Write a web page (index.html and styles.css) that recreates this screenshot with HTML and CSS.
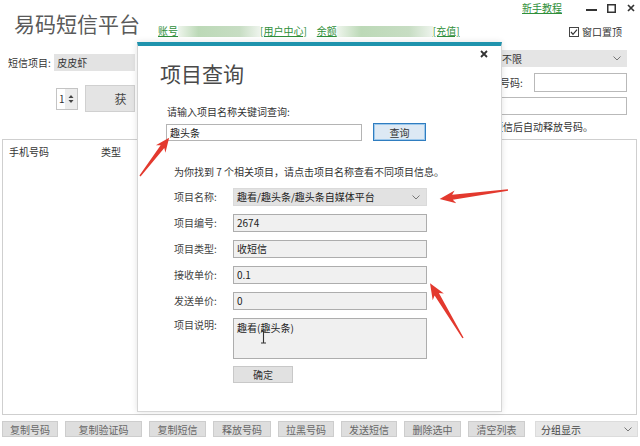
FILE: index.html
```html
<!DOCTYPE html>
<html lang="zh-CN">

<head>
    <meta charset="UTF-8" />
    <meta name="viewport" content="width=device-width,initial-scale=1.0" />
    <title>易码短信平台</title>
    <link rel="stylesheet" href="styles.css">
</head>

<body>
    <div class="app">
        <div class="topbar">
            <h1 class="brand">易码短信平台</h1>
            <div class="account">
                <a href="#">账号</a><span class="mask mask-user"></span><a href="#">[用户中心]</a>
                <a href="#" class="balance">余额</a><span class="mask mask-money"></span><a href="#">[充值]</a>
            </div>
            <div class="corner">
                <div class="wintools">
                    <a href="#">新手教程</a>
                    <svg class="wbtn-min" width="11" height="9" viewBox="0 0 11 9"><rect x="0" y="5" width="11" height="2" fill="#333"/></svg>
                    <svg class="wbtn-max" width="9" height="9" viewBox="0 0 9 9"><rect x="0.75" y="0.75" width="7.5" height="7.5" fill="none" stroke="#333" stroke-width="1.5"/></svg>
                    <svg class="wbtn-close" width="8" height="8" viewBox="0 0 8 8"><path d="M1 1L7 7M7 1L1 7" stroke="#333" stroke-width="1.7"/></svg>
                </div>
                <div class="pin">
                    <svg width="10" height="10" viewBox="0 0 10 10"><rect x="0.5" y="0.5" width="9" height="9" fill="#fff" stroke="#444"/><path d="M2 5L4 7.3L8 2.6" fill="none" stroke="#333" stroke-width="1.2"/></svg>
                    窗口置顶
                </div>
            </div>
        </div>

        <div class="panel">
            <div class="panel-left">
                <div class="row-project">
                    <span class="row-label">短信项目:</span>
                    <div class="combo-input">皮皮虾</div>
                </div>
                <div class="row-get">
                    <div class="spinner">
                        <span class="spinner-value">1</span>
                        <span class="spinner-arrows">
                            <svg width="6" height="12" viewBox="0 0 6 12"><path d="M3 2L5.5 5H0.5Z" fill="#444"/><path d="M3 10L5.5 7H0.5Z" fill="#444"/></svg>
                        </span>
                    </div>
                    <button class="btn-get">获</button>
                </div>
            </div>
            <div class="panel-right">
                <div class="combo">
                    <span>不限</span>
                    <svg width="8" height="5" viewBox="0 0 8 5"><path d="M0.5 0.5L4 4L7.5 0.5" fill="none" stroke="#777"/></svg>
                </div>
                <div class="row-phone">
                    <span class="row-label">号码:</span>
                    <div class="plain-input"></div>
                </div>
                <div class="plain-input wide"></div>
                <p class="auto-release">短信后自动释放号码。</p>
            </div>
        </div>

        <div class="list">
            <div class="list-head">
                <span class="col-phone">手机号码</span>
                <span>类型</span>
            </div>
        </div>

        <div class="actions">
            <button class="act w56">复制号码</button>
            <button class="act w77">复制验证码</button>
            <button class="act w57">复制短信</button>
            <button class="act w58">释放号码</button>
            <button class="act w56">拉黑号码</button>
            <button class="act w56">发送短信</button>
            <button class="act w57">删除选中</button>
            <button class="act w57">清空列表</button>
            <div class="group-select">
                <span>分组显示</span>
                <svg width="8" height="5" viewBox="0 0 8 5"><path d="M0.5 0.5L4 4L7.5 0.5" fill="none" stroke="#777"/></svg>
            </div>
        </div>
    </div>

    <!-- 项目查询弹窗 -->
    <div class="dialog">
        <div class="dialog-head">
            <h2 class="dialog-title">项目查询</h2>
            <svg class="dialog-close" width="8" height="8" viewBox="0 0 8 8"><path d="M1 1L7 7M7 1L1 7" stroke="#333" stroke-width="1.8"/></svg>
        </div>
        <p class="search-label">请输入项目名称关键词查询:</p>
        <div class="search-row">
            <div class="field search-input">趣头条</div>
            <button class="btn-query">查询</button>
        </div>
        <p class="hint">为你找到 7 个相关项目，请点击项目名称查看不同项目信息。</p>
        <div class="info">
            <span class="info-label">项目名称:</span>
            <div class="field field-select">
                <span>趣看/趣头条/趣头条自媒体平台</span>
                <svg width="8" height="5" viewBox="0 0 8 5"><path d="M0.5 0.5L4 4L7.5 0.5" fill="none" stroke="#777"/></svg>
            </div>
            <span class="info-label">项目编号:</span>
            <div class="field">2674</div>
            <span class="info-label">项目类型:</span>
            <div class="field">收短信</div>
            <span class="info-label">接收单价:</span>
            <div class="field">0.1</div>
            <span class="info-label">发送单价:</span>
            <div class="field">0</div>
            <span class="info-label memo-label">项目说明:</span>
            <div class="field memo">
                趣看(趣头条)
                <svg class="ibeam" width="7" height="14" viewBox="0 0 7 14"><path d="M1 1H6M3.5 1V13M1 13H6" fill="none" stroke="#333" stroke-width="1.1"/></svg>
            </div>
            <span></span>
            <button class="btn-ok">确定</button>
        </div>
    </div>

    <svg class="arrows" width="640" height="446" viewBox="0 0 640 446">
        <polygon points="0,-0.7 37,-2.3 34,-6 48,0 34,6 37,2.3 0,0.7" transform="translate(140 176) rotate(-52.6)"/>
        <polygon points="0,-0.7 56,-2.5 53,-6.5 69,0 53,6.5 56,2.5 0,0.7" transform="translate(508 190) rotate(172.5)"/>
        <polygon points="0,-0.7 51,-2.5 48,-6.5 64,0 48,6.5 51,2.5 0,0.7" transform="translate(463 338) rotate(-121)"/>
    </svg>
</body>

</html>
```

FILE: styles.css
```css
* {
    margin: 0;
    padding: 0;
    box-sizing: border-box;
}

body {
    width: 640px;
    height: 446px;
    overflow: hidden;
    position: relative;
    background: #fff;
    color: #333;
    font-family: "Noto Sans CJK SC", "Microsoft YaHei", sans-serif;
    font-size: 10px;
}

a {
    color: #2f8f3a;
    text-decoration: underline;
}

button {
    font-family: inherit;
    font-size: 10px;
    cursor: pointer;
}

.topbar {
    display: flex;
    align-items: flex-start;
    height: 42px;
}

.brand {
    margin: 10px 0 0 14px;
    font-size: 21px;
    line-height: 26px;
    font-weight: 400;
    color: #5a5a5a;
}

.account {
    display: flex;
    align-items: center;
    margin: 25px 0 0 18px;
    line-height: 12px;
}

.mask {
    display: inline-block;
    height: 11px;
    background: linear-gradient(90deg, #eef5ec, #bcd9b7 25%, #c7ddc3 75%, #eef4ed);
}

.mask-user {
    width: 82px;
}

.mask-money {
    width: 96px;
}

.balance {
    margin-left: 10px;
}

.corner {
    margin-left: auto;
    display: flex;
    flex-direction: column;
    align-items: flex-end;
}

.wintools {
    display: flex;
    align-items: center;
    height: 14px;
    margin: 1px 5px 0 0;
}

.wintools a {
    line-height: 12px;
}

.wbtn-min {
    margin-left: 24px;
}

.wbtn-max {
    margin-left: 10px;
}

.wbtn-close {
    margin-left: 11px;
}

.pin {
    display: flex;
    align-items: center;
    gap: 3px;
    margin: 11px 18px 0 0;
    line-height: 12px;
    color: #333;
}

/* 上方表单区 */
.panel {
    display: flex;
    height: 97px;
}

.panel-left {
    width: 135px;
    padding: 12px 0 0 8px;
}

.row-project {
    display: flex;
    align-items: center;
    height: 17px;
}

.row-label {
    width: 48px;
    white-space: nowrap;
    color: #333;
}

.combo-input {
    width: 84px;
    height: 17px;
    line-height: 17px;
    padding-left: 3px;
    background: #e3e3e3;
}

.row-get {
    display: flex;
    align-items: center;
    margin-top: 14px;
    padding-left: 48px;
}

.spinner {
    display: flex;
    width: 34px;
    height: 22px;
    border: 1px solid #c4c4c4;
    background: #fff;
}

.spinner-value {
    flex: 1;
    padding-left: 2px;
    line-height: 20px;
}

.spinner-arrows {
    width: 12px;
    display: flex;
    align-items: center;
    justify-content: center;
    background: #ececec;
}

.btn-get {
    margin-left: 7px;
    width: 80px;
    height: 27px;
    border: 1px solid #d0d0d0;
    background: #e4e4e4;
    color: #444;
    font-size: 12px;
    text-align: left;
    padding-left: 29px;
    white-space: nowrap;
}

.panel-right {
    margin-left: auto;
    width: 134px;
    margin-right: 13px;
    padding-top: 8px;
}

.combo {
    display: flex;
    align-items: center;
    justify-content: space-between;
    height: 17px;
    padding: 0 6px 0 9px;
    background: #e5e5e5;
    white-space: nowrap;
}

.row-phone {
    display: flex;
    align-items: center;
    margin-top: 6px;
    height: 19px;
}

.row-phone .row-label {
    width: 41px;
    padding-left: 7px;
}

.plain-input {
    flex: 1;
    height: 19px;
    border: 1px solid #b9b9b9;
    background: #fff;
}

.plain-input.wide {
    margin-top: 5px;
    height: 18px;
}

.auto-release {
    margin-top: 5px;
    line-height: 14px;
    white-space: nowrap;
}

/* 号码列表 */
.list {
    height: 276px;
    margin: 0 3px 0 2px;
    border: 1px solid #cfcfcf;
}

.list-head {
    display: flex;
    padding: 5px 0 0 6px;
    line-height: 14px;
    color: #333;
}

.col-phone {
    width: 92px;
}

.actions {
    display: flex;
    gap: 7px;
    margin-top: 6px;
    padding-left: 2px;
}

.act {
    height: 16px;
    border: 1px solid #cdcdcd;
    background: #dedede;
    color: #666;
}

.w56 { width: 56px; }
.w57 { width: 57px; }
.w58 { width: 58px; }
.w77 { width: 77px; }

.group-select {
    display: flex;
    align-items: center;
    justify-content: space-between;
    width: 103px;
    height: 16px;
    margin-left: 3px;
    padding: 0 5px 0 5px;
    border: 1px solid #dcdcdc;
    background: #e8e8e8;
    color: #444;
}

/* 弹窗 */
.dialog {
    position: absolute;
    left: 137px;
    top: 42px;
    width: 365px;
    height: 370px;
    background: #fff;
    border: 1px solid #d6d6d6;
    border-top: 4px solid #1f93ad;
    box-shadow: 0 0 6px rgba(0, 0, 0, 0.12);
}

.dialog-head {
    display: flex;
    justify-content: space-between;
    align-items: flex-start;
    padding: 4px 13px 0 22px;
}

.dialog-title {
    margin-top: 10px;
    font-size: 21px;
    line-height: 26px;
    font-weight: 400;
    color: #4a4a4a;
}

.search-label {
    margin-top: 19px;
    padding-left: 29px;
    line-height: 14px;
}

.search-row {
    display: flex;
    align-items: center;
    margin-top: 4px;
    padding-left: 28px;
}

.field {
    height: 18px;
    line-height: 16px;
    padding: 0 3px;
    border: 1px solid #adadad;
    background: #f0f0f0;
    color: #222;
    white-space: nowrap;
}

.search-input {
    width: 196px;
    height: 17px;
    line-height: 15px;
    background: #fff;
    border-color: #b4b4b4;
}

.btn-query {
    margin-left: 11px;
    width: 53px;
    height: 18px;
    border: 1px solid #2f7dc0;
    box-shadow: inset 0 0 0 1px #9cc8ec;
    background: #dde9f4;
    color: #333;
}

.hint {
    margin-top: 24px;
    padding-left: 36px;
    line-height: 14px;
}

.info {
    display: grid;
    grid-template-columns: 59px 194px;
    row-gap: 8px;
    align-items: center;
    margin-top: 9px;
    padding-left: 36px;
}

.info-label {
    line-height: 14px;
    color: #444;
}

.memo-label {
    align-self: start;
}

.field-select {
    display: flex;
    align-items: center;
    justify-content: space-between;
    padding: 0 6px 0 3px;
    border-color: #dadada;
    background: #e2e2e2;
}

.memo {
    position: relative;
    height: 41px;
    padding-top: 1px;
}

.ibeam {
    position: absolute;
    left: 26px;
    top: 11px;
}

.btn-ok {
    width: 60px;
    height: 17px;
    margin-top: -1px;
    border: 1px solid #c8c8c8;
    background: #e1e1e1;
    color: #333;
}

.arrows {
    position: absolute;
    left: 0;
    top: 0;
    pointer-events: none;
}

.arrows polygon {
    fill: #e3392e;
}
```
